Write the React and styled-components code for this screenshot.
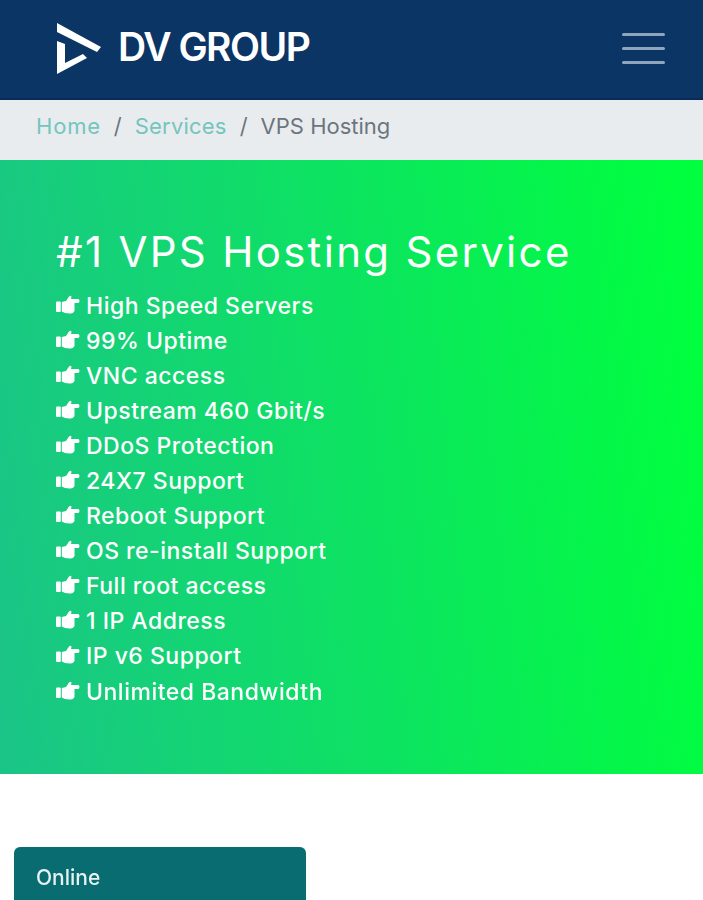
import React from 'react';
import styled, { createGlobalStyle } from 'styled-components';

const GlobalStyle = createGlobalStyle`
  html, body {
    margin: 0;
    padding: 0;
    background: #fff;
    font-family: Inter, "Noto Sans", sans-serif;
    overflow: hidden;
  }
`;

const Page = styled.div`
  width: 703px;
  height: 900px;
  overflow: hidden;
  filter: blur(0.45px);
`;

const Navbar = styled.header`
  height: 98px;
  background: #0b3565;
  border-bottom: 2px solid #0a2a58;
  display: flex;
  align-items: center;
  justify-content: space-between;
  padding: 0 38px 0 56px;
`;

const Brand = styled.div`
  display: flex;
  align-items: center;
  gap: 16px;
`;

const BrandName = styled.span`
  color: #fff;
  font-size: 39px;
  font-weight: 600;
  letter-spacing: -1.5px;
  margin-top: -6px;
`;

const Burger = styled.div`
  display: flex;
  flex-direction: column;
  gap: 11px;
  margin-top: -1px;
`;

const BurgerLine = styled.span`
  display: block;
  width: 43px;
  height: 3px;
  border-radius: 2px;
  background: #8fa4bd;
`;

const Breadcrumb = styled.nav`
  height: 60px;
  box-sizing: border-box;
  padding: 0 36px 8px;
  background: #e9ecef;
  display: flex;
  align-items: center;
  font-size: 22px;
`;

const Crumb = styled.span`
  color: ${(p) => (p.$active ? '#6c757d' : '#74c5bd')};
  letter-spacing: ${(p) => p.$track || 0}px;
`;

const Slash = styled.span`
  color: #6c757d;
  margin: 0 13px;
`;

const Hero = styled.section`
  height: 614px;
  box-sizing: border-box;
  padding: 62px 56px 0;
  background: linear-gradient(84deg, #1bc488 0%, #00ff3e 97%);
  color: #fff;
`;

const Title = styled.h1`
  margin: 0 0 6px;
  font-size: 42px;
  line-height: 60px;
  font-weight: 400;
  letter-spacing: 2.3px;
`;

const FeatureList = styled.ul`
  list-style: none;
  margin: 0;
  padding: 0;
`;

const Feature = styled.li`
  display: flex;
  align-items: center;
  gap: 6px;
  height: 35.1px;
  font-size: 23px;
  font-weight: 500;
  letter-spacing: 0.5px;
`;

const HandIcon = styled.svg`
  width: 24px;
  height: 19px;
  margin-top: -3px;
  flex: none;
  fill: #fff;
`;

const Panels = styled.div`
  padding: 73px 14px 0;
`;

const Panel = styled.div`
  width: 292px;
  height: 80px;
  box-sizing: border-box;
  padding: 18px 22px;
  background: #096c70;
  border-radius: 6px;
  color: #e6f2f2;
  font-size: 21px;
  font-weight: 500;
`;

const features = [
  'High Speed Servers',
  '99% Uptime',
  'VNC access',
  'Upstream 460 Gbit/s',
  'DDoS Protection',
  '24X7 Support',
  'Reboot Support',
  'OS re-install Support',
  'Full root access',
  '1 IP Address',
  'IP v6 Support',
  'Unlimited Bandwidth',
];

const Logo = () => (
  <svg width="46" height="52" viewBox="0 0 46 52" fill="#fff">
    <polygon points="1,0 45,24 41,29 1,9" />
    <polygon points="1,18 9,21 9,40 27,31 31,35 1,51" />
  </svg>
);

const Hand = () => (
  <HandIcon viewBox="0 0 24 19">
    <rect x="0" y="6.5" width="4.8" height="10.5" rx="1" />
    <path d="M5.8 7 L10 6 L13 1.5 Q15 0 15.5 2 L15 4 L22.5 4 Q24.5 6 22.5 8 L18.5 8 L18.5 16 Q17 19 13.5 18.5 L9 18 L5.8 16.5 Z" />
  </HandIcon>
);

export default function App() {
  return (
    <Page>
      <GlobalStyle />
      <Navbar>
        <Brand>
          <Logo />
          <BrandName>DV GROUP</BrandName>
        </Brand>
        <Burger>
          <BurgerLine />
          <BurgerLine />
          <BurgerLine />
        </Burger>
      </Navbar>
      <Breadcrumb>
        <Crumb $track={0.8}>Home</Crumb>
        <Slash>/</Slash>
        <Crumb $track={0.2}>Services</Crumb>
        <Slash>/</Slash>
        <Crumb $active>VPS Hosting</Crumb>
      </Breadcrumb>
      <Hero>
        <Title>#1 VPS Hosting Service</Title>
        <FeatureList>
          {features.map((f) => (
            <Feature key={f}>
              <Hand />
              {f}
            </Feature>
          ))}
        </FeatureList>
      </Hero>
      <Panels>
        <Panel>Online</Panel>
      </Panels>
    </Page>
  );
}
